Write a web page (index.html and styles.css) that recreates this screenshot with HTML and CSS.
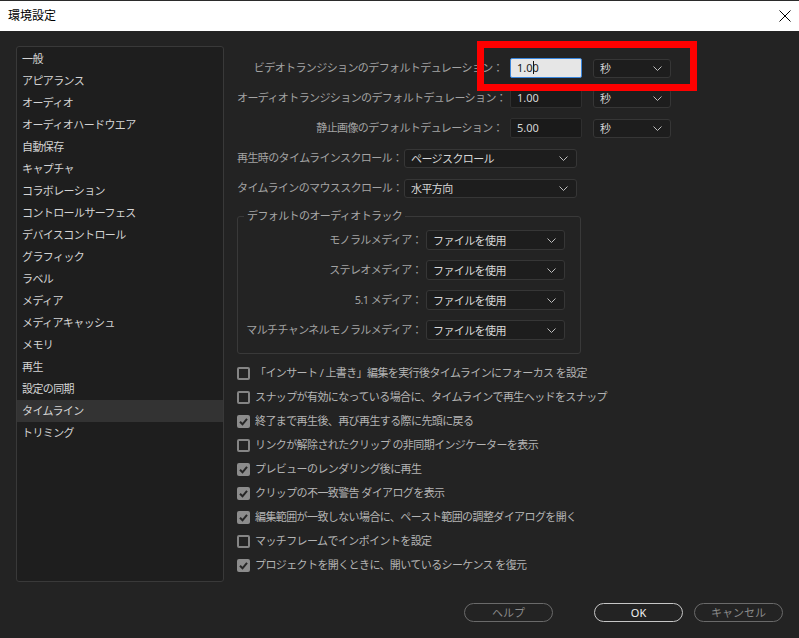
FILE: index.html
```html
<!DOCTYPE html>
<html lang="ja">
<head>
<meta charset="utf-8">
<title>環境設定</title>
<link rel="stylesheet" href="styles.css">
</head>
<body>
<div class="titlebar">
  <span class="title">環境設定</span>
  <svg class="close" width="12" height="12" viewBox="0 0 12 12"><path d="M0.5 0.5 L11.5 11.5 M11.5 0.5 L0.5 11.5" stroke="#000" stroke-width="1" fill="none"/></svg>
</div>
<div class="content">
  <div class="main">
    <ul class="nav">
      <li>一般</li>
      <li>アピアランス</li>
      <li>オーディオ</li>
      <li>オーディオハードウエア</li>
      <li>自動保存</li>
      <li>キャプチャ</li>
      <li>コラボレーション</li>
      <li>コントロールサーフェス</li>
      <li>デバイスコントロール</li>
      <li>グラフィック</li>
      <li>ラベル</li>
      <li>メディア</li>
      <li>メディアキャッシュ</li>
      <li>メモリ</li>
      <li>再生</li>
      <li>設定の同期</li>
      <li class="active">タイムライン</li>
      <li>トリミング</li>
    </ul>
    <div class="panel">
      <div class="row dur">
        <span class="lbl">ビデオトランジションのデフォルトデュレーション：</span>
        <span class="input focus">1.0<span class="caret"></span>0</span>
        <span class="select unit"><span>秒</span><svg class="chev" width="9" height="5" viewBox="0 0 9 5"><path d="M0.5 0.5 L4.5 4.5 L8.5 0.5" stroke="#bdbdbd" fill="none"/></svg></span>
      </div>
      <div class="row dur">
        <span class="lbl">オーディオトランジションのデフォルトデュレーション：</span>
        <span class="input">1.00</span>
        <span class="select unit"><span>秒</span><svg class="chev" width="9" height="5" viewBox="0 0 9 5"><path d="M0.5 0.5 L4.5 4.5 L8.5 0.5" stroke="#bdbdbd" fill="none"/></svg></span>
      </div>
      <div class="row dur">
        <span class="lbl">静止画像のデフォルトデュレーション：</span>
        <span class="input">5.00</span>
        <span class="select unit"><span>秒</span><svg class="chev" width="9" height="5" viewBox="0 0 9 5"><path d="M0.5 0.5 L4.5 4.5 L8.5 0.5" stroke="#bdbdbd" fill="none"/></svg></span>
      </div>
      <div class="row scr">
        <span class="lbl">再生時のタイムラインスクロール：</span>
        <span class="select wide"><span>ページスクロール</span><svg class="chev" width="9" height="5" viewBox="0 0 9 5"><path d="M0.5 0.5 L4.5 4.5 L8.5 0.5" stroke="#bdbdbd" fill="none"/></svg></span>
      </div>
      <div class="row scr last">
        <span class="lbl">タイムラインのマウススクロール：</span>
        <span class="select wide"><span>水平方向</span><svg class="chev" width="9" height="5" viewBox="0 0 9 5"><path d="M0.5 0.5 L4.5 4.5 L8.5 0.5" stroke="#bdbdbd" fill="none"/></svg></span>
      </div>
      <fieldset class="group">
        <legend>デフォルトのオーディオトラック</legend>
        <div class="row trk">
          <span class="lbl">モノラルメディア：</span>
          <span class="select mid"><span>ファイルを使用</span><svg class="chev" width="9" height="5" viewBox="0 0 9 5"><path d="M0.5 0.5 L4.5 4.5 L8.5 0.5" stroke="#bdbdbd" fill="none"/></svg></span>
        </div>
        <div class="row trk">
          <span class="lbl">ステレオメディア：</span>
          <span class="select mid"><span>ファイルを使用</span><svg class="chev" width="9" height="5" viewBox="0 0 9 5"><path d="M0.5 0.5 L4.5 4.5 L8.5 0.5" stroke="#bdbdbd" fill="none"/></svg></span>
        </div>
        <div class="row trk">
          <span class="lbl">5.1 メディア：</span>
          <span class="select mid"><span>ファイルを使用</span><svg class="chev" width="9" height="5" viewBox="0 0 9 5"><path d="M0.5 0.5 L4.5 4.5 L8.5 0.5" stroke="#bdbdbd" fill="none"/></svg></span>
        </div>
        <div class="row trk last">
          <span class="lbl">マルチチャンネルモノラルメディア：</span>
          <span class="select mid"><span>ファイルを使用</span><svg class="chev" width="9" height="5" viewBox="0 0 9 5"><path d="M0.5 0.5 L4.5 4.5 L8.5 0.5" stroke="#bdbdbd" fill="none"/></svg></span>
        </div>
      </fieldset>
      <div class="checks">
        <div class="chk"><span class="box"></span><span class="txt">「インサート / 上書き」編集を実行後タイムラインにフォーカス を設定</span></div>
        <div class="chk"><span class="box"></span><span class="txt">スナップが有効になっている場合に、タイムラインで再生ヘッドをスナップ</span></div>
        <div class="chk"><span class="box on"><svg width="13" height="13" viewBox="0 0 13 13"><path d="M3 6.8 L5.5 9.3 L10 3.8" stroke="#262626" stroke-width="2" fill="none"/></svg></span><span class="txt">終了まで再生後、再び再生する際に先頭に戻る</span></div>
        <div class="chk"><span class="box"></span><span class="txt">リンクが解除されたクリップ の非同期インジケーターを表示</span></div>
        <div class="chk"><span class="box on"><svg width="13" height="13" viewBox="0 0 13 13"><path d="M3 6.8 L5.5 9.3 L10 3.8" stroke="#262626" stroke-width="2" fill="none"/></svg></span><span class="txt">プレビューのレンダリング後に再生</span></div>
        <div class="chk"><span class="box on"><svg width="13" height="13" viewBox="0 0 13 13"><path d="M3 6.8 L5.5 9.3 L10 3.8" stroke="#262626" stroke-width="2" fill="none"/></svg></span><span class="txt">クリップの不一致警告 ダイアログを表示</span></div>
        <div class="chk"><span class="box on"><svg width="13" height="13" viewBox="0 0 13 13"><path d="M3 6.8 L5.5 9.3 L10 3.8" stroke="#262626" stroke-width="2" fill="none"/></svg></span><span class="txt">編集範囲が一致しない場合に、ペースト範囲の調整ダイアログを開く</span></div>
        <div class="chk"><span class="box"></span><span class="txt">マッチフレームでインポイントを設定</span></div>
        <div class="chk"><span class="box on"><svg width="13" height="13" viewBox="0 0 13 13"><path d="M3 6.8 L5.5 9.3 L10 3.8" stroke="#262626" stroke-width="2" fill="none"/></svg></span><span class="txt">プロジェクトを開くときに、開いているシーケンス を復元</span></div>
      </div>
    </div>
  </div>
  <div class="footer">
    <span class="btn help">ヘルプ</span>
    <span class="btn ok">OK</span>
    <span class="btn">キャンセル</span>
  </div>
</div>
<div class="highlight"></div>
</body>
</html>
```

FILE: styles.css
```css
* { box-sizing: border-box; }
html, body { margin: 0; padding: 0; }
body {
  width: 799px;
  height: 638px;
  overflow: hidden;
  position: relative;
  background: #232323;
  font-family: "Noto Sans", "Noto Sans CJK JP", sans-serif;
  font-size: 11px;
  letter-spacing: -0.6px;
  color: #cfcfcf;
}
.titlebar {
  height: 31px;
  background: #fff;
  border-top: 1px solid #2b2b2b;
  display: flex;
  align-items: center;
  justify-content: space-between;
  padding: 0 8px 0 8px;
}
.title { font-size: 12px; color: #000; line-height: 16px; letter-spacing: 0; }
.close { display: block; }

.content { padding: 15px 16px 0 16px; }
.main { display: flex; align-items: flex-start; }

.nav {
  list-style: none;
  margin: 0;
  padding: 1px 0 0 0;
  width: 208px;
  height: 536px;
  background: #1e1e1e;
  border: 1px solid #393939;
  border-radius: 3px;
}
.nav li {
  height: 22px;
  line-height: 22px;
  padding-left: 5px;
  color: #d4d4d4;
  white-space: nowrap;
}
.nav li.active { background: #333333; }

.panel {
  margin-left: 13px;
  padding-top: 12px;
  display: flex;
  flex-direction: column;
}
.row {
  display: flex;
  align-items: center;
  height: 20px;
  margin-bottom: 10px;
}
.row.last { margin-bottom: 0; }
.lbl {
  text-align: right;
  color: #a3a3a3;
  white-space: nowrap;
  line-height: 20px;
}
.dur .lbl { width: 266px; margin-right: 7px; }
.scr .lbl { width: 162px; margin-right: 5px; }
.trk .lbl { width: 184px; margin-right: 4px; }

.input {
  width: 72px;
  height: 20px;
  line-height: 18px;
  padding-left: 6px;
  background: #1a1a1a;
  border: 1px solid #2f2f2f;
  border-radius: 2px;
  color: #d6d6d6;
  margin-right: 11px;
  letter-spacing: 0;
}
.input.focus {
  background: #e6e6e6;
  border-color: #3a86dc;
  color: #1a1a1a;
}
.caret {
  display: inline-block;
  width: 1px;
  height: 13px;
  background: #111;
  vertical-align: -2px;
  margin: 0 -1px 0 0;
}
.select {
  height: 19px;
  display: flex;
  align-items: center;
  justify-content: space-between;
  background: #1d1d1d;
  border: 1px solid #363636;
  border-radius: 3px;
  color: #d8d8d8;
  padding: 0 8px 0 6px;
  line-height: 17px;
}
.select.unit { width: 78px; }
.select.wide { width: 173px; }
.select.mid { width: 139px; height: 20px; }
.chev { display: block; }

.group {
  margin: 11px 0 0 0;
  padding: 7px 0 13px 0;
  width: 344px;
  border: 1px solid #393939;
  border-radius: 3px;
  min-width: 0;
}
.group legend {
  padding: 0 3px;
  margin-left: 6px;
  line-height: 14px;
  color: #a8a8a8;
}

.checks { margin-top: 7px; display: flex; flex-direction: column; }
.chk {
  height: 24px;
  display: flex;
  align-items: center;
}
.box {
  width: 13px;
  height: 13px;
  border: 2px solid #858585;
  border-radius: 2px;
  margin-right: 5px;
  flex: none;
}
.box.on {
  background: #8c8c8c;
  border: none;
}
.box svg { display: block; }
.txt { color: #b4b4b4; white-space: nowrap; line-height: 16px; }

.footer {
  margin-top: 21px;
  display: flex;
  justify-content: flex-end;
}
.btn {
  width: 89px;
  height: 19px;
  border: 1px solid #6a6a6a;
  border-radius: 10px;
  color: #8a8a8a;
  display: flex;
  align-items: center;
  justify-content: center;
  line-height: 17px;
  letter-spacing: 0;
}
.btn.help { margin-right: 41px; }
.btn.ok {
  margin-right: 11px;
  border-color: #c6c6c6;
  color: #f2f2f2;
}

.highlight {
  position: absolute;
  left: 477px;
  top: 41px;
  width: 220px;
  height: 50px;
  border: 7px solid #fe0000;
}
```
